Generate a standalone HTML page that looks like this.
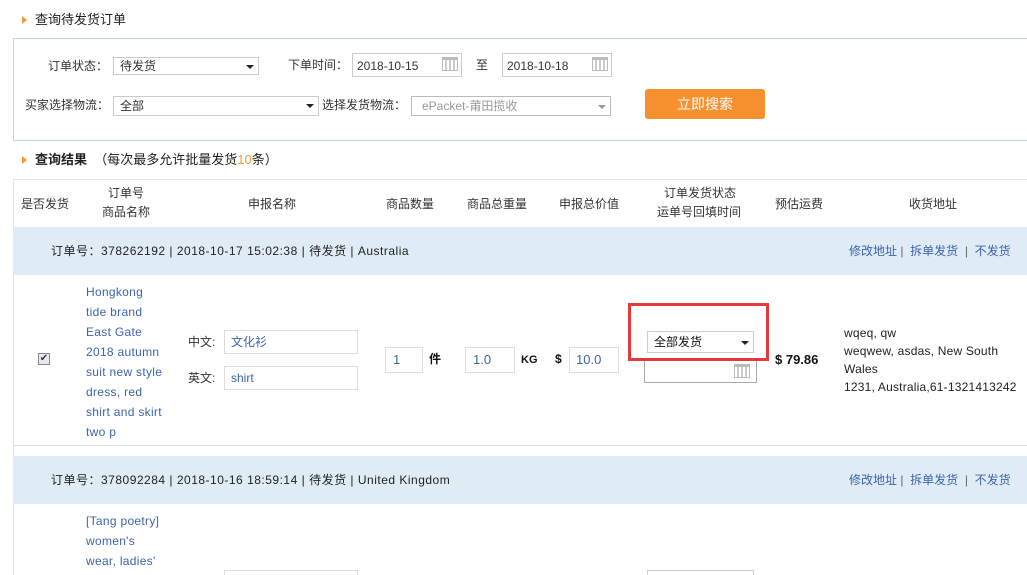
<!DOCTYPE html>
<html><head><meta charset="utf-8"><style>
*{margin:0;padding:0;box-sizing:border-box}
html,body{width:1027px;height:575px;overflow:hidden}
body{background:#fff;font-family:"Liberation Sans","Noto Sans CJK SC",sans-serif;font-size:12px;color:#333;position:relative}
.a{position:absolute;white-space:nowrap;line-height:16px}
.tri{position:absolute;width:0;height:0;border-left:5px solid #f39a36;border-top:4px solid transparent;border-bottom:4px solid transparent}
.box{position:absolute;border:1px solid #ccc;background:#fff}
.ln{color:#3c64ac}
.dd{position:absolute;width:0;height:0;border-top:4px solid #222;border-left:4px solid transparent;border-right:4px solid transparent}
.cal{position:absolute;width:16px;height:14px;border:1px solid #bbb;border-top:3px solid #bbb;background:repeating-linear-gradient(90deg,#fff 0 2px,#ccc 2px 4px)}
.bar{position:absolute;left:13px;right:0;height:48px;background:#dfebf5}
.hl{position:absolute;left:13px;right:0;height:1px;background:#dde2e6}
.ob{letter-spacing:0.5px}
</style></head><body>
<div class="tri" style="left:22px;top:16px"></div>
<div class="a" style="left:35px;top:12px;font-size:13px;color:#222">查询待发货订单</div>
<div style="position:absolute;left:13px;top:38px;width:1020px;height:103px;border:1px solid #c9d5dd"></div>
<div class="a" style="left:48px;top:58px">订单状态：</div>
<div class="box" style="left:113px;top:57px;width:146px;height:18px"></div>
<div class="a" style="left:120px;top:58px">待发货</div><div class="dd" style="left:246px;top:65px"></div>
<div class="a" style="left:288px;top:57px">下单时间：</div>
<div class="box" style="left:352px;top:53px;width:110px;height:24px"></div>
<div class="a" style="left:357px;top:58px">2018-10-15</div><div class="cal" style="left:442px;top:57px"></div>
<div class="a" style="left:476px;top:57px">至</div>
<div class="box" style="left:502px;top:53px;width:110px;height:24px"></div>
<div class="a" style="left:507px;top:58px">2018-10-18</div><div class="cal" style="left:592px;top:57px"></div>
<div class="a" style="left:25px;top:97px">买家选择物流：</div>
<div class="box" style="left:113px;top:96px;width:206px;height:20px"></div>
<div class="a" style="left:120px;top:98px">全部</div><div class="dd" style="left:306px;top:104px"></div>
<div class="a" style="left:322px;top:97px">选择发货物流：</div>
<div class="box" style="left:411px;top:96px;width:200px;height:20px;border-color:#bbb"></div>
<div class="a" style="left:422px;top:98px;color:#999">ePacket-莆田揽收</div>
<div class="dd" style="left:598px;top:105px;border-top-color:#999"></div>
<div style="position:absolute;left:645px;top:89px;width:120px;height:30px;background:#f7902f;border-radius:3px;color:#fff;font-size:14px;text-align:center;line-height:30px">立即搜索</div>
<div class="tri" style="left:22px;top:156px"></div>
<div class="a" style="left:35px;top:152px;font-size:13px;color:#222"><b>查询结果</b>&nbsp;&nbsp;（每次最多允许批量发货<span style="color:#f39a36">10</span>条）</div>
<div class="hl" style="top:179px"></div>
<div style="position:absolute;left:13px;top:179px;width:1px;height:400px;background:#dde2e6"></div>
<div class="a" style="left:21px;top:196px">是否发货</div>
<div class="a" style="left:108px;top:185px">订单号</div><div class="a" style="left:102px;top:204px">商品名称</div>
<div class="a" style="left:248px;top:196px">申报名称</div>
<div class="a" style="left:386px;top:196px">商品数量</div>
<div class="a" style="left:467px;top:196px">商品总重量</div>
<div class="a" style="left:559px;top:196px">申报总价值</div>
<div class="a" style="left:664px;top:185px">订单发货状态</div><div class="a" style="left:657px;top:204px">运单号回填时间</div>
<div class="a" style="left:775px;top:196px">预估运费</div>
<div class="a" style="left:909px;top:196px">收货地址</div>
<div class="bar" style="top:227px"></div>
<div class="a ob" style="left:51px;top:243px;color:#222">订单号：378262192 | 2018-10-17 15:02:38 | 待发货 | Australia</div>
<div class="a ln" style="left:849px;top:243px">修改地址 <span style="color:#666">|</span>&nbsp; 拆单发货 &nbsp;<span style="color:#666">|</span>&nbsp; 不发货</div>
<div style="position:absolute;left:38px;top:353px;width:12px;height:12px;border:1px solid #888;background:#e8e8ee;font-size:10px;line-height:10px;text-align:center;color:#334">✔</div>
<div class="a ln" style="left:86px;top:282px;line-height:20px;letter-spacing:0.3px">Hongkong<br>tide brand<br>East Gate<br>2018 autumn<br>suit new style<br>dress, red<br>shirt and skirt<br>two p</div>
<div class="a" style="left:188px;top:334px">中文:</div>
<div class="box" style="left:224px;top:330px;width:134px;height:24px;border-color:#ddd"></div>
<div class="a ln" style="left:231px;top:334px">文化衫</div>
<div class="a" style="left:188px;top:370px">英文:</div>
<div class="box" style="left:224px;top:366px;width:134px;height:24px;border-color:#ddd"></div>
<div class="a ln" style="left:231px;top:370px">shirt</div>
<div class="box" style="left:385px;top:347px;width:38px;height:26px;border-color:#ddd"></div>
<div class="a ln" style="left:393px;top:352px;font-size:13px">1</div>
<div class="a" style="left:429px;top:351px;font-weight:bold;color:#111">件</div>
<div class="box" style="left:465px;top:347px;width:50px;height:26px;border-color:#ddd"></div>
<div class="a ln" style="left:473px;top:352px;font-size:13px">1.0</div>
<div class="a" style="left:521px;top:352px;font-weight:bold;font-size:11px;color:#111">KG</div>
<div class="a" style="left:555px;top:351px;font-weight:bold;color:#111">$</div>
<div class="box" style="left:569px;top:347px;width:50px;height:26px;border-color:#ddd"></div>
<div class="a ln" style="left:576px;top:352px;font-size:13px">10.0</div>
<div class="box" style="left:644px;top:358px;width:113px;height:25px;border-color:#aaa"></div>
<div class="cal" style="left:734px;top:364px"></div>
<div style="position:absolute;left:628px;top:303px;width:141px;height:58px;border:3px solid #e5393b"></div>
<div class="box" style="left:647px;top:331px;width:107px;height:22px;border-color:#ccc"></div>
<div class="a" style="left:654px;top:334px;color:#111">全部发货</div><div class="dd" style="left:741px;top:341px"></div>
<div class="a" style="left:775px;top:352px;font-weight:bold;font-size:13px;color:#111">$ 79.86</div>
<div class="a" style="left:844px;top:324px;line-height:18px;color:#222;letter-spacing:0.2px">wqeq, qw<br>weqwew, asdas, New South<br>Wales<br>1231, Australia,61-1321413242</div>
<div class="hl" style="top:445px"></div>
<div class="bar" style="top:456px"></div>
<div class="a ob" style="left:51px;top:472px;color:#222">订单号：378092284 | 2018-10-16 18:59:14 | 待发货 | United Kingdom</div>
<div class="a ln" style="left:849px;top:472px">修改地址 <span style="color:#666">|</span>&nbsp; 拆单发货 &nbsp;<span style="color:#666">|</span>&nbsp; 不发货</div>
<div class="a ln" style="left:86px;top:511px;line-height:20px;letter-spacing:0.3px">[Tang poetry]<br>women's<br>wear, ladies'<br>l</div>
<div class="box" style="left:224px;top:570px;width:134px;height:24px;border-color:#ddd"></div>
<div class="box" style="left:647px;top:570px;width:107px;height:22px;border-color:#ccc"></div>
</body></html>
